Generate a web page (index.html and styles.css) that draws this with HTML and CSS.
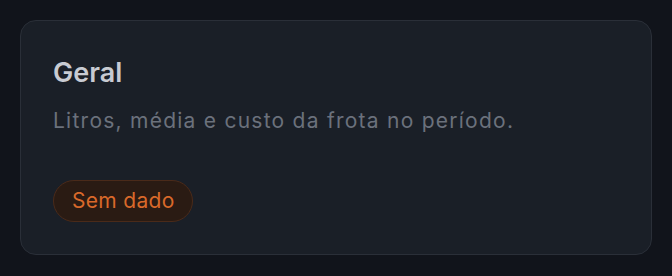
FILE: index.html
```html
<!DOCTYPE html>
<html lang="pt">
<head>
    <meta charset="UTF-8">
    <meta name="viewport" content="width=device-width, initial-scale=1.0">
    <title>Geral</title>
    <link rel="stylesheet" href="styles.css">
</head>
<body>

    <div class="card">
        <h2 class="card-title">Geral</h2>
        <p class="card-desc">Litros, média e custo da frota no período.</p>
        <span class="badge">Sem dado</span>
    </div>

</body>
</html>
```

FILE: styles.css
```css
body {
    margin: 0;
    padding: 20px;
    background-color: #11141b;
    font-family: Inter, "Noto Sans", sans-serif;
}
.card {
    background: #1a1f27;
    border: 1px solid #2a2f38;
    border-radius: 16px;
    padding: 35px 32px 32px;
}
.card-title {
    margin: 0;
    font-size: 27px;
    font-weight: 600;
    line-height: 34px;
    color: #c8cbd2;
}
.card-desc {
    margin: 17px 0 0;
    font-size: 21px;
    line-height: 28px;
    letter-spacing: 1.25px;
    color: #6b717c;
}
.badge {
    display: inline-block;
    margin-top: 45px;
    padding: 0 17px 0 18px;
    line-height: 40px;
    font-size: 21px;
    letter-spacing: 0.3px;
    color: #d9692a;
    background: #2a1b13;
    border: 1px solid #4a2a19;
    border-radius: 999px;
}
```
